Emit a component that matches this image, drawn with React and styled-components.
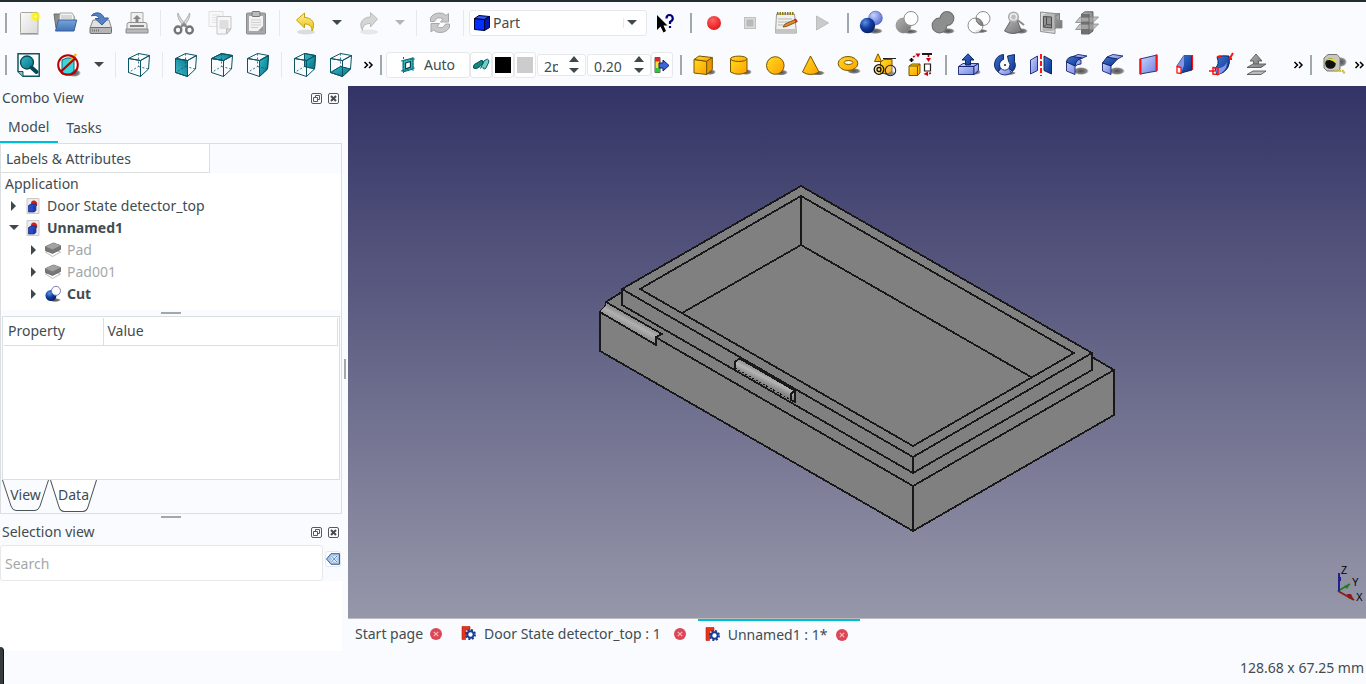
import React, { useState } from "react";
import styled, { createGlobalStyle, css } from "styled-components";

const color = {
  bg: "#fafbfe",
  white: "#ffffff",
  line: "#dcdfe1",
  soft: "#e6e8ea",
  text: "#414c51",
  muted: "#a3a7a9",
  handle: "#a0a8aa",
  accent: "#00bcd4",
};

const GlobalStyle = createGlobalStyle`
  *, *::before, *::after { box-sizing: border-box; }
  body {
    margin: 0;
    background: ${color.bg};
    color: ${color.text};
    font: 14px/22px "Noto Sans", sans-serif;
  }
  button, input, select { font: inherit; color: inherit; margin: 0; padding: 0; border: 0; background: none; }
  ul { list-style: none; margin: 0; padding: 0; }
`;

/* ---------- page frame ---------- */
const Window = styled.div`
  display: flex;
  flex-direction: column;
  min-height: 100vh;
  border-top: 2px solid #222d30;
  position: relative;
  overflow: hidden;
`;
const Toolbars = styled.header`
  display: flex;
  flex-direction: column;
`;
const ToolbarRow = styled.div`
  display: flex;
  align-items: center;
  gap: 2px;
  height: 42px;
`;
const ToolGroup = styled.div`
  display: flex;
  align-items: center;
  flex: none;
`;
const Grip = styled.span`
  width: 2px;
  height: 20px;
  margin: 0 4px 0 5px;
  background: ${color.handle};
`;
const Separator = styled.span`
  width: 1px;
  height: 26px;
  margin: 0 5px;
  background: ${color.soft};
`;
const ToolButton = styled.button`
  display: flex;
  align-items: center;
  justify-content: center;
  width: ${(p) => (p.$split ? 41 : 36)}px;
  height: 36px;
`;
const ArrowButton = styled.button`
  display: flex;
  align-items: center;
  justify-content: center;
  width: 22px;
  height: 36px;
`;
const MoreButton = styled.button`
  display: flex;
  align-items: center;
  justify-content: flex-end;
  width: ${(p) => p.$width}px;
  height: 36px;
`;
const Svg = styled.svg`
  display: block;
  flex: none;
  overflow: visible;
`;
const fieldBox = css`
  display: flex;
  align-items: center;
  height: 26px;
  background: ${color.white};
  border: 1px solid ${color.soft};
  border-radius: 3px;
`;
const Workbench = styled.label`
  ${fieldBox}
  width: 178px;
  padding: 0 6px 0 4px;
  gap: 3px;
`;
const WorkbenchSelect = styled.select`
  flex: 1;
  min-width: 0;
  appearance: none;
  outline: none;
`;
const WorkbenchArrow = styled.span`
  display: flex;
  align-items: center;
  height: 10px;
  padding: 0 3px;
  border-left: 1px solid ${color.soft};
`;
const FieldButton = styled.button`
  && {
    ${fieldBox}
    justify-content: center;
    gap: 7px;
    width: ${(p) => (p.$wide ? 84 : 22)}px;
  }
`;
const Swatch = styled.span`
  width: 16px;
  height: 16px;
  background: ${(p) => p.$fill};
`;
const Spin = styled.div`
  ${fieldBox}
  height: 22px;
  width: ${(p) => p.$width}px;
  margin-left: 1px;
  padding: 0 6px;
  justify-content: space-between;
`;
const SpinClip = styled.span`
  display: flex;
  align-items: flex-start;
  height: 13px;
  width: ${(p) => p.$width}px;
  overflow: hidden;
`;
const SpinInput = styled.input`
  flex: none;
  width: 100%;
  height: 16px;
  outline: none;
`;
const SpinButtons = styled.span`
  display: flex;
  flex-direction: column;
  gap: 6px;
`;
const SpinStep = styled.button`
  display: block;
  height: 6px;
`;

/* ---------- docks ---------- */
const Body = styled.div`
  display: flex;
  flex: 1;
  min-height: 0;
`;
const Side = styled.aside`
  display: flex;
  flex-direction: column;
  flex: none;
  width: 342px;
`;
const DockTitle = styled.div`
  display: flex;
  align-items: center;
  gap: 6px;
  height: 25px;
  padding: 0 3px 1px 2px;
`;
const DockName = styled.h2`
  flex: 1;
  margin: 0;
  font: inherit;
`;
const DockButton = styled.button`
  display: block;
  height: 11px;
`;
const Tabs = styled.div`
  display: flex;
  height: 32px;
`;
const Tab = styled.button`
  padding: ${(p) => (p.$active ? "2px 9px 0 8px" : "4px 8px 0")};
  border-bottom: 2px solid ${(p) => (p.$active ? color.accent : "transparent")};
`;
const Pane = styled.div`
  display: flex;
  flex-direction: column;
  flex: 1;
  border: 1px solid ${color.line};
`;
const TreeHeader = styled.div`
  width: 209px;
  height: 29px;
  padding: 4px 5px;
  background: ${color.white};
  border-right: 1px solid ${color.line};
  border-bottom: 1px solid ${color.line};
`;
const Tree = styled.ul`
  && { height: 137px; }
  background: ${color.white};
`;
const TreeItem = styled.li`
  display: flex;
  align-items: center;
  height: 22px;
  padding-left: ${(p) => [4, 8, 28][p.$level]}px;
  font-weight: ${(p) => (p.$bold ? 700 : 400)};
  color: ${(p) => (p.$muted ? color.muted : "inherit")};
`;
const TreeToggle = styled.button`
  display: flex;
  justify-content: center;
  width: 10px;
  margin-right: 6px;
`;
const TreeIcon = styled.span`
  display: flex;
  justify-content: center;
  width: 16px;
  margin-right: 6px;
`;
const Splitter = styled.div`
  display: flex;
  justify-content: center;
  align-items: center;
  flex: none;
  ${(p) => (p.$vertical ? "width: 6px;" : "height: 6px;")}
  &::after {
    content: "";
    width: ${(p) => (p.$vertical ? 2 : 20)}px;
    height: ${(p) => (p.$vertical ? 20 : 2)}px;
    background: ${color.handle};
  }
`;
const PropertyBox = styled.div`
  flex: 1;
  margin: 0 1px;
  padding: 1px;
  background: ${color.white};
  border: 1px solid ${color.line};
`;
const PropertyTable = styled.table`
  width: 100%;
  border-collapse: collapse;
  table-layout: fixed;
`;
const PropertyHead = styled.th`
  width: ${(p) => p.$width || "auto"};
  height: 27px;
  padding: 0 4px;
  font-weight: 400;
  text-align: left;
  border: solid ${color.line};
  border-width: 0 1px 1px 0;
`;
const SheetTabs = styled.div`
  display: flex;
  gap: 1px;
  height: 33px;
  padding-left: 1px;
`;
const SheetTab = styled.button`
  position: relative;
  width: 47px;
  height: ${(p) => (p.$active ? 32 : 31)}px;
  padding-bottom: 2px;
  svg { position: absolute; inset: 0; width: 100%; height: 100%; }
  span { position: relative; }
`;
const SearchRow = styled.form`
  display: flex;
  align-items: flex-start;
  gap: 2px;
  padding-right: 1px;
`;
const SearchInput = styled.input`
  && {
    flex: 1;
    min-width: 0;
    height: 36px;
    padding: 0 4px;
    background: ${color.white};
    border: 1px solid ${color.soft};
    border-radius: 3px;
    outline: none;
  }
  &::placeholder { color: ${color.muted}; opacity: 1; }
`;
const ClearButton = styled.button`
  && {
    display: flex;
    align-items: center;
    justify-content: center;
    width: 16px;
    height: 16px;
    margin-top: 6px;
    background: ${color.white};
    border: 1px solid ${color.soft};
    border-radius: 3px;
  }
`;
const SelectionList = styled.ul`
  && { height: 70px; }
  background: ${color.white};
`;

/* ---------- document area ---------- */
const Documents = styled.main`
  display: flex;
  flex-direction: column;
  flex: 1;
  min-width: 0;
`;
const Viewport = styled.div`
  position: relative;
  flex: 1;
  min-height: 0;
  background: linear-gradient(#333366, #9797aa);
  border-bottom: 1px solid #bcbcbc;
`;
const Scene = styled.svg`
  position: absolute;
  inset: 0;
  width: 100%;
  height: 100%;
`;
const AxisCross = styled.svg`
  position: absolute;
  right: 0;
  bottom: 14px;
`;
const DocTabs = styled.nav`
  display: flex;
  height: 32px;
`;
const DocTab = styled.div`
  display: flex;
  align-items: center;
  gap: ${(p) => (p.$plain ? 7 : 9)}px;
  padding: 0 12px 3px 7px;
  ${(p) => p.$active && css`
    box-shadow: inset 0 2px ${color.accent};
    padding-bottom: 1px;
  `}
`;
const DocTabName = styled.button`
  display: flex;
  align-items: center;
  gap: 8px;
  white-space: nowrap;
`;
const CloseButton = styled.button`
  display: block;
  margin-left: ${(p) => (p.$spaced ? 4 : 0)}px;
`;
const StatusBar = styled.footer`
  display: flex;
  align-items: center;
  justify-content: flex-end;
  height: 33px;
  padding: 0 2px;
`;
const DockEdge = styled.div`
  position: absolute;
  left: 0;
  bottom: 0;
  width: 4px;
  height: 37px;
  background: #363c3b;
  border-right: 1px solid #111;
  border-top-right-radius: 4px;
`;

/* ---------- icons ---------- */
const DefsSvg = styled.svg`
  position: absolute;
`;
const Gradients = () => (
  <DefsSvg width="0" height="0" aria-hidden="true">
    <defs>
      <linearGradient id="gPage" x2="1" y2="1"><stop stopColor="#fafafa" /><stop offset="1" stopColor="#d9d9d9" /></linearGradient>
      <linearGradient id="gBlue" x2="0" y2="1"><stop stopColor="#7aa5dc" /><stop offset="1" stopColor="#4272b5" /></linearGradient>
      <linearGradient id="gGold" x2="1" y2="1"><stop stopColor="#ffdc20" /><stop offset="1" stopColor="#ffa000" /></linearGradient>
      <linearGradient id="gLav" x2="1" y2="1"><stop stopColor="#cdd7ff" /><stop offset="1" stopColor="#6a7fe0" /></linearGradient>
      <linearGradient id="gNavy" x2="1" y2="1"><stop stopColor="#3f78d0" /><stop offset="1" stopColor="#0a3190" /></linearGradient>
      <linearGradient id="gTeal" x2="1" y2="1"><stop stopColor="#36bccb" /><stop offset="1" stopColor="#066f85" /></linearGradient>
      <linearGradient id="gTealUp" x2="1" y1="1" y2="0"><stop stopColor="#48bccb" /><stop offset="1" stopColor="#067a90" /></linearGradient>
      <linearGradient id="gGrey" x2="1" y2="1"><stop stopColor="#b2b2b2" /><stop offset="1" stopColor="#747474" /></linearGradient>
      <linearGradient id="gUndo" x2="0" y2="1"><stop stopColor="#fff0a0" /><stop offset="1" stopColor="#e8c000" /></linearGradient>
      <radialGradient id="rBlue" cx=".35" cy=".3" r=".75"><stop stopColor="#5d90e8" /><stop offset=".5" stopColor="#123f9f" /><stop offset="1" stopColor="#061d62" /></radialGradient>
      <radialGradient id="rLav" cx=".35" cy=".3" r=".8"><stop stopColor="#c5d0ff" /><stop offset="1" stopColor="#5064d0" /></radialGradient>
      <radialGradient id="rRed" cx=".4" cy=".3" r=".8"><stop stopColor="#ff6060" /><stop offset="1" stopColor="#dd1010" /></radialGradient>
      <radialGradient id="rGlow"><stop stopColor="#fffbd0" /><stop offset=".35" stopColor="#fff200" /><stop offset="1" stopColor="#fff200" stopOpacity="0.1" /></radialGradient>
      <radialGradient id="rShade"><stop stopColor="#222" stopOpacity=".8" /><stop offset=".7" stopColor="#333" stopOpacity=".6" /><stop offset="1" stopColor="#444" stopOpacity="0" /></radialGradient>
    </defs>
  </DefsSvg>
);

const shade = (cx = 16, cy = 20, rx = 8, ry = 3) => <ellipse cx={cx} cy={cy} rx={rx} ry={ry} fill="url(#rShade)" />;
const gold = { fill: "url(#gGold)", stroke: "#765500", strokeWidth: 1, strokeLinejoin: "round" };
const lav = { fill: "url(#gLav)", stroke: "#16246e", strokeWidth: 0.9, strokeLinejoin: "round" };
const navy = { fill: "url(#gNavy)", stroke: "#081a55", strokeWidth: 0.9, strokeLinejoin: "round" };
const grey = { fill: "url(#gGrey)", stroke: "#5a5a5a", strokeWidth: 0.9, strokeLinejoin: "round" };
const red = { fill: "none", stroke: "#ff1010", strokeWidth: 2 };

const cubeFaces = {
  front: "M1.5 5.5L13.5 7.5V23.500L1.5 19.500Z",
  top: "M1.5 5.5L13.5 7.5L22.500 2.500L11.500 .5Z",
  right: "M13.500 7.500L22.500 2.500L21.500 16L13.500 23.500Z",
  rear: "M11.500 .5L22.500 2.500L21.500 16L11.500 13.500Z",
  bottom: "M1.500 19.500L13.500 23.500L21.500 16L11.500 13.500Z",
};
const cube = (face) => (
  <g fill="none" stroke="#0b5564" strokeWidth="1" strokeLinejoin="round">
    {face && <path d={cubeFaces[face]} fill={face === "top" || face === "front" ? "url(#gTealUp)" : "url(#gTeal)"} />}
    <path d={cubeFaces.front} />
    <path d={cubeFaces.top} />
    <path d={cubeFaces.right} />
    <path d="M11.500 .5V13.500L1.500 19.500M11.500 13.500L21.500 16" strokeWidth=".8" strokeDasharray="2 2" />
  </g>
);

const ICONS = {
  new: <><rect x="3.500" y="1.500" width="17.500" height="21" rx="1" fill="url(#gPage)" stroke="#a8a8a0" /><path d="M3 23h18.500" stroke="#888" /><circle cx="18.500" cy="5.500" r="5.500" fill="url(#rGlow)" /></>,
  open: <><path d="M1 3h6l1 2h13v12H3z" fill="#8e8e8c" stroke="#6b6b69" /><path d="M7 2h12l2 3v5H6z" fill="#f4f4f2" stroke="#a5a5a5" /><path d="M8 5h11M8 7h11" stroke="#b9b9b9" /><path d="M5.500 9H23.700L21 20H2.500Z" fill="url(#gBlue)" stroke="#36619e" /></>,
  save: <><path d="M4 9H20L22.500 17H1Z" fill="#e2e2e2" stroke="#8a8a8a" /><rect x="1" y="16.500" width="21.500" height="6" rx="1" fill="#b5b5b5" stroke="#6e6e6e" /><path d="M3 19.500h8" stroke="#777" strokeDasharray="1 1" strokeWidth="2" /><path d="M2.500 5C4 1 13 0 15 7H19.500L13 14L6 7.500H10C9.500 5 6 3.500 2.500 5Z" fill="#5582c0" stroke="#33609f" /></>,
  print: <><path d="M6 1.500H18V12H6Z" fill="#f0f0f0" stroke="#aaa" /><path d="M12 4l4 4h-2.500v3h-3V8H8z" fill="#888" /><rect x="2" y="11.500" width="20" height="8" rx="2" fill="#ececec" stroke="#8f8f8f" /><path d="M5 15h14" stroke="#666" strokeWidth="1.500" /><path d="M1 18H23V22H1Z" fill="#b9b9b9" stroke="#8c8c8c" /></>,
  cut: <g><path d="M6 2C4.500 5 8 12 13 16L14.500 14C10 10 7 5 6 2ZM17.500 2C19 5 15.500 12 10.500 16L9 14C13.500 10 16.500 5 17.500 2Z" fill="#ddd" stroke="#a0a0a0" strokeWidth=".8" /><ellipse cx="6" cy="19" rx="3.300" ry="3.500" fill="none" stroke="#757575" strokeWidth="2.400" /><ellipse cx="17.500" cy="19" rx="3.300" ry="3.500" fill="none" stroke="#757575" strokeWidth="2.400" /><path d="M8.500 16.500L12 13L15 16.500" stroke="#888" strokeWidth="2" fill="none" /></g>,
  copy: <><path d="M1 .5H15V15.500H1Z" fill="#f8f8f8" stroke="#dedede" /><path d="M4 4h8M4 6.500h8M4 9h8M4 11.500h8" stroke="#e2e2e2" /><path d="M9 5.500H23V18L18.500 23H9Z" fill="#f6f6f6" stroke="#c6c6c6" /><path d="M11.500 9h9v9h-9z" fill="#dedede" /><path d="M23 18h-4.500v5z" fill="#ddd" stroke="#bbb" /></>,
  paste: <><rect x="2.500" y="2" width="19" height="21" rx="1" fill="#a8a8a8" stroke="#8b8b8b" /><path d="M5 5H19V20H5Z" fill="#f2f2f2" /><path d="M7 9h10M7 11.500h10M7 14h10M7 16.500h7" stroke="#cfcfcf" /><rect x="8" y=".5" width="8" height="5" rx="1" fill="#bbb" stroke="#777" /><path d="M19 15v5h-5z" fill="#999" /></>,
  undo: <><ellipse cx="12" cy="21" rx="9" ry="2.500" fill="#000" opacity=".12" /><path d="M2.500 9L10.500 2V6.500C18 6.500 22 12 18 20C18 15 15 13 10.500 13V17Z" fill="url(#gUndo)" stroke="#c6a208" /></>,
  redo: <><ellipse cx="12" cy="21" rx="9" ry="2.500" fill="#000" opacity=".08" /><path d="M20.500 8L13.500 1.500V6C6 6 1 12 5.500 19.500C5.500 14 9 12.500 13.500 12.500V16Z" fill="#d5d5d5" stroke="#bcbcbc" /></>,
  refresh: <g fill="#c9c9c9" stroke="#a8a8a8"><path d="M2.500 10.500V7Q5 2 12 2Q16 2 18 4.500L20.500 2.500V11H12.500L15 8Q9 4.500 6.500 10.500Z" /><path d="M21.500 13V16Q19 21.500 12 21.500Q8 21.500 5.500 19L3 21V12.500H11.500L9 15.500Q15 19 17.500 13Z" /></g>,
  partCube: <g stroke="#000033" strokeLinejoin="round" transform="translate(4 4)"><path d="M.5 3.500L10.500 4.500V15.500L.5 14.500Z" fill="#0030ff" /><path d="M.5 3.500L5 .5L15.500 1.500L10.500 4.500Z" fill="#2c56ff" /><path d="M10.500 4.500L15.500 1.500V12.500L10.500 15.500Z" fill="#0018b0" /></g>,
  help: <><path d="M4 4V19L7.500 15.500L10.500 21.500L13 20L10.500 14.500H14.500Z" fill="#000" /><path d="M13.500 7.500Q13.500 4 16.500 4T19.800 7.500Q19.800 9.500 17 11V13M17 15V17" fill="none" stroke="#00007c" strokeWidth="2.200" /></>,
  record: <circle cx="12" cy="12" r="7" fill="url(#rRed)" />,
  stop: <><rect x="6.500" y="6.500" width="11" height="11" fill="#dcdcdc" stroke="#c0c0c0" /><rect x="8.500" y="8.500" width="7" height="7" fill="#b8b8b8" /></>,
  note: <><path d="M2.500 3H20.500L22.500 22H1.500Z" fill="#f0f0ee" stroke="#9b9b98" /><path d="M1.500 18H22.500V22H1.500Z" fill="#c4c4c2" /><path d="M4 8h14M4 11h12M4 14h6" stroke="#b5b5b5" /><path d="M3 2.500h17" stroke="#8b7a18" strokeWidth="3" strokeDasharray="1.500 1" /><path d="M9 16L11 13L21 8.500L22.500 11L12.500 15.500Z" fill="#e08a2c" stroke="#6f4317" strokeWidth=".8" /><path d="M21 8L23 11" stroke="#d02020" strokeWidth="2" /></>,
  play: <path d="M6.500 5L18.500 12L6.500 19Z" fill="#c9cccc" stroke="#bdbdbd" />,
  boolean: <>{shade(16, 20, 8, 3)}<circle cx="16.500" cy="7" r="6.800" fill="url(#rLav)" stroke="#4a5aaa" strokeWidth=".7" /><circle cx="8.500" cy="14.500" r="7.700" fill="url(#rBlue)" /></>,
  cutBool: <>{shade(15, 20.500, 8, 2.500)}<circle cx="8.500" cy="14.500" r="7.500" fill="url(#gGrey)" stroke="#888" strokeWidth=".7" /><circle cx="16" cy="7.500" r="7" fill="#fff" stroke="#8d8d8d" /></>,
  fuse: <>{shade(17, 20, 7, 3)}<g stroke="#6b6b6b" strokeWidth="1.800"><circle cx="16" cy="7.500" r="6.500" /><circle cx="8.500" cy="14.500" r="7" /></g><circle cx="16" cy="7.500" r="6.500" fill="#8e8e8e" /><circle cx="8.500" cy="14.500" r="7" fill="#8e8e8e" /></>,
  common: <>{shade(14, 20, 7, 2)}<circle cx="8.500" cy="14.500" r="7.500" fill="#fff" fillOpacity=".8" stroke="#8d8d8d" /><circle cx="16" cy="7.500" r="7" fill="#fff" fillOpacity=".6" stroke="#8d8d8d" /><path d="M9.200 7.100A7.500 7.500 0 0 1 16 14.500A7 7 0 0 1 9.200 7.100Z" fill="url(#gGrey)" stroke="#777" /></>,
  check: <>{shade(18, 20, 7, 3)}<path d="M8 9H14L18.500 20Q10 25 1.500 20Z" {...grey} /><circle cx="10.500" cy="6" r="4.800" fill="#e6e6e6" fillOpacity=".85" stroke="#aaa" strokeWidth="1.500" /><path d="M14.500 9L21 14" stroke="#8b8b8b" strokeWidth="2" /><circle cx="10.500" cy="6" r="2.300" fill="#bbb" /></>,
  defeaturing: <><path d="M4 5L8 2.500H20.500V9.500H23V17H17L13.500 19.500H4Z" {...grey} stroke="#888" /><path d="M16 6L20.500 2.500V9.500" fill="#a4a4a4" stroke="#777" strokeWidth=".8" /><path d="M1.500 1V20.500L16 22.500V2.500Z" fill="#c9c9c9" fillOpacity=".65" stroke="#929292" /><path d="M4.500 5.500L12.500 6V17L4.500 16Z" fill="#909090" stroke="#4e4e4e" /><path d="M7.500 6v7.500l5 .5M7.500 13.500l-3 2.500" fill="none" stroke="#4e4e4e" /></>,
  section: <><path d="M6.500 3L10 .8H18V20L14 23H6.500Z" {...grey} /><path d="M5 6H23.500L18 11.500H.5Z" fill="#aaa" fillOpacity=".7" stroke="#858585" strokeWidth=".8" /><path d="M5 13H23.500L18 18.500H.5Z" fill="#aaa" fillOpacity=".7" stroke="#858585" strokeWidth=".8" /><path d="M6.500 3H14V6.500H6.500ZM6.500 10.500H14V13.500H6.500ZM6.500 18H14V23H6.500Z" fill="#707070" /><path d="M14 3V23" stroke="#606060" strokeWidth=".8" /></>,

  fit: <><path d="M1 .8H22.200V23.200H6L1 18.500Z" fill="#fff" stroke="#0b5564" strokeWidth="1.500" /><path d="M1 18.500H6V23.200" fill="#9bb" stroke="#0b5564" /><circle cx="10" cy="9.500" r="6.500" fill="url(#gTeal)" stroke="#064657" strokeWidth="1.300" /><path d="M14.500 14.500L19.500 19" stroke="#064657" strokeWidth="4" strokeLinecap="round" /></>,
  drawStyle: <>{shade(18, 20, 7, 4)}<path d="M6 7L11 5H18V18L14 21H6Z" fill="#3cd5dd" stroke="#0e6b78" /><path d="M13 11L20 1" stroke="#e8c31c" strokeWidth="2.500" /><circle cx="12" cy="12" r="9.800" fill="none" stroke="#b80000" strokeWidth="2" /><path d="M5 18.500L19 5.500" stroke="#b80000" strokeWidth="2.300" /></>,
  iso: cube(),
  front: cube("front"),
  top: cube("top"),
  right: cube("right"),
  rear: cube("rear"),
  bottom: cube("bottom"),

  plane: <g transform="translate(4 4)"><path d="M2 3.500L12 1V12L2 15Z" fill="#3cc0c8" stroke="#0a6570" /><path d="M4.500 6L9.500 4.500V10L4.500 12Z" fill="#fff" stroke="#053f49" strokeWidth="1.300" /><path d="M0 4L14 2M0 14L14 11M2.500 0v16M12 0v15" stroke="#087885" strokeDasharray="2 1" /></g>,
  construction: <g transform="translate(4 4)"><path d="M7.500 11.500L11 4Q16 0 15.800 5L13 11Q10 13.500 10 10" fill="#6cd0c4" stroke="#065c62" /><path d="M.5 11Q0 7 4 6L8 3.500Q11 3 10 6L7 9.500Q3 13 .5 11Z" fill="#10897f" stroke="#044d50" /></g>,
  apply: <g transform="translate(4 4)"><path d="M1 .5H6V15.500H1Z" fill="#f8e03a" stroke="#555" /><path d="M1 .5H6V4.500H1Z" fill="#e62424" /><path d="M1 11H6V15.500H1Z" fill="#35c435" /><path d="M5 6H9V3L15 8.500L9 14V11H5Z" fill="#3c66d8" stroke="#0a246e" /></g>,

  box: <>{shade(18, 19, 6, 3)}<g {...gold}><path d="M2 6.500L14.700 8.300V21.500L2 20Z" /><path d="M2 6.500L7 3L20.300 4.500L14.700 8.300Z" /><path d="M14.700 8.300L20.300 4.500V16.500L14.700 21.500Z" fill="#eb9800" /></g></>,
  cylinder: <>{shade(18, 19, 6, 3)}<path d="M2.500 5.500V19Q10.500 23.500 19 19V5.500" {...gold} /><ellipse cx="10.700" cy="5.800" rx="8.200" ry="2.700" {...gold} /></>,
  sphere: <>{shade(17, 19.500, 7, 3)}<circle cx="11.300" cy="12.500" r="8.800" {...gold} /></>,
  cone: <>{shade(18, 20, 7, 2.500)}<path d="M10.500 3L19 19Q10.500 24 2.500 19Z" {...gold} /></>,
  torus: <>{shade(18, 18, 7, 3)}<ellipse cx="12" cy="10.500" rx="9.800" ry="7" {...gold} /><ellipse cx="12.500" cy="9.500" rx="4.300" ry="2" fill="#fff" stroke="#765500" /></>,
  primitives: <>{shade(17, 20, 6, 3)}<path d="M8.500 9L12 6.500H20V18L17 20.500H8.500Z" {...gold} /><path d="M6 .8L9.500 8.500H2.500Z" {...gold} /><path d="M11 5.500H24" stroke="#222" strokeWidth="1" /><g fill="none" stroke="#111" strokeWidth="1.300"><circle cx="7" cy="16.500" r="4.800" fill="#ffc000" fillOpacity=".4" /><circle cx="7" cy="16.500" r="2" /></g><circle cx="18.500" cy="17.500" r="5.200" fill="#e6e9ff" fillOpacity=".2" stroke="#1c2350" strokeWidth="1.100" /></>,
  builder: <><path d="M1 13L4 11H12V20L9.500 22.500H1Z" {...gold} /><path d="M1 13H9.500V22.500M9.500 13L12 11" fill="none" stroke="#765500" /><path d="M14 1H24" stroke="#000" strokeWidth="1.800" /><path d="M16.500 11H22.500V18H16.500Z" fill="#fff" stroke="#222" strokeWidth="1.200" /><path d="M3.500 5v4M1.500 7h4" stroke="#000" strokeWidth="1.600" /><path d="M5 4L8 2.500M20.500 2v4M23 20l-3 1" stroke="#c00000" strokeWidth="1.600" strokeDasharray="2 1" /><path d="M7.500 .5h5l-2.500 4zM18 5h5L20.500 9zM20 18.500v4.500l-4.500-2z" fill="#d00010" /></>,

  extrude: <>{shade(18, 19, 6, 3)}<path d="M1.500 13.500L6 10.500H21L17 13.500V21.500H1.500Z" {...lav} /><path d="M17 13.500L21.500 10.500V17.500L17 21.500Z" {...lav} /><path d="M1.500 13.500H17" stroke="#16246e" /><path d="M11 .8L17 7H13.500V12H8.500V7H5Z" {...navy} /></>,
  revolve: <>{shade(17, 20, 6, 2)}<path d="M10.500 1.500A10 10 0 0 0 4.500 18.500L8 15.500A5.500 5.500 0 0 1 10.500 6.500Z" {...navy} /><path d="M5 19A9.500 9.500 0 0 0 18.500 19.500L15.500 15.500A5 5 0 0 1 8 15.500Z" {...lav} /><path d="M14.500 3L21.500 1.500V8.500Q24 14 19.500 18.500L16 15Q18.500 11 15.500 8Z" {...navy} /><circle cx="12" cy="12" r="1" fill="#123" /></>,
  mirror: <><path d="M1.500 7L8.500 3V17.500L1.500 21Z" {...lav} /><path d="M15 3L22.500 7V21L15 17.500Z" {...navy} /><path d="M12 1V23" stroke="#ff1616" strokeWidth="2" strokeDasharray="5 2" /></>,
  fillet: <>{shade(16, 18, 8, 4)}<path d="M1.500 9V18L10 21.500V13.500Q12 11 16 11V7L5 5Z" {...lav} /><path d="M1.500 9Q2 4 8 3.500L17.500 5Q11 6 10 13Z" {...navy} /><path d="M8 3.500L13 1.500L22 3L17.500 5Z" {...lav} /></>,
  chamfer: <>{shade(16, 18, 8, 4)}<path d="M1.500 10V18L10 21.500V13L7 9Z" {...lav} /><path d="M1.500 10L6 4L16.500 6L10 13Z" {...navy} /><path d="M6 4L12 1.500L22 3L16.500 6Z" {...lav} /></>,
  ruled: <><path d="M3 6L20 2V18L3 21Z" {...lav} /><path d="M3.500 5.500V21.500M19.500 1.500V17.500" {...red} /></>,
  loft: <><path d="M4 13L11 2.500H19V17L8 20Z" {...navy} /><path d="M4 13L11 2.500V12.500L8 20Z" fill="#8094e8" /><path d="M4 13.500L8 14.500V20.500L4 20Z" fill="#fff" stroke="#ff1010" strokeWidth="1.300" /><path d="M11 2.500H19.500V17" {...red} strokeWidth="1.200" /></>,
  sweep: <><path d="M8 4Q13 2 20 3Q23 18 8 22L6 15Q11 12 8 4Z" {...navy} /><path d="M18 9Q18 19 8 22L7 15Q15 16 18 9Z" fill="#8395e8" /><path d="M24 0L20.500 6M20.500 6H23M8 4L12 3" {...red} /><path d="M4 14.500L9 15V21.500L4 21ZM0 18H6" {...red} strokeWidth="1.500" /></>,
  offset: <><path d="M11 1L17 8H13.500V12H8.500V8H5Z" {...grey} /><path d="M2 14.500L8 11H21L16 14.500Z" {...grey} /><path d="M2 21.500L8 18H21L16 21.500Z" {...grey} fill="#bbb" /></>,
  tape: <>{shade(19, 9, 6, 5)}<path d="M2 5L6 1.500H15L18 5V16L16 18H5L2 15Z" fill="#c8c8bd" stroke="#777" /><circle cx="8.500" cy="10.500" r="5.300" fill="#101010" /><path d="M3.500 8Q7 3 14 7V10.500Q9 5 3.500 8Z" fill="#e8de24" /><path d="M12 17.500L22 18V21" fill="none" stroke="#d3bd31" strokeWidth="2.300" strokeDasharray="2 .6" /></>,
};

const Icon = ({ name, size = 24 }) => (
  <Svg width={size} height={size} viewBox={size === 16 ? "4 4 16 16" : "0 0 24 24"} aria-hidden="true">{ICONS[name]}</Svg>
);
const Triangle = ({ dir = "down", fill = "#3f484c" }) => {
  const shapes = { down: [10, 6, "0,0 10,0 5,5"], up: [10, 6, "0,6 10,6 5,0"], right: [6, 10, "0,0 5,5 0,10"] };
  const [w, h, points] = shapes[dir];
  return <Svg width={w} height={h} aria-hidden="true"><polygon points={points} fill={fill} /></Svg>;
};
const Chevrons = () => (
  <Svg width="9" height="8" aria-hidden="true"><path d="M.5 1L3.500 4L.5 7M5 1L8 4L5 7" fill="none" stroke="#000" strokeWidth="1.500" /></Svg>
);
const DocumentIcon = () => (
  <Svg width="14" height="16" aria-hidden="true">
    <path d="M1 .5H13V15.500H1Z" fill="#ececec" stroke="#c9c9c9" />
    <path d="M5 5.500Q5 2 8.500 2.500Q12 3.500 11 8H6Z" fill="#cc2214" />
    <path d="M2.500 7.500L5 6H10V12.500L8 14H2.500Z" fill="#2748c8" stroke="#112777" strokeWidth=".7" />
    <path d="M8 8V14" stroke="#112777" strokeWidth=".7" />
  </Svg>
);
const PadIcon = () => (
  <Svg width="16" height="16" viewBox="0 0 16 16" aria-hidden="true">
    <path d="M.5 10L7 7L15.500 10L7.500 14.500Z" fill="#fff" stroke="#aaa" strokeWidth=".8" />
    <path d="M.5 4.500L8.500 1L15.500 3.500V7.500L7.500 11.500L.5 8.500Z" fill="#777" stroke="#555" strokeWidth=".7" />
    <path d="M.5 4.500L8.500 1L15.500 3.500L7.500 7.500Z" fill="#a2a2a2" />
  </Svg>
);
const CutIcon = () => (
  <Svg width="16" height="16" viewBox="0 0 16 16" aria-hidden="true">
    {shade(10, 14, 6, 2)}
    <circle cx="6" cy="9.500" r="5.500" fill="url(#rBlue)" />
    <circle cx="11" cy="4.800" r="4.500" fill="#fff" stroke="#7981ad" />
  </Svg>
);
const FreeCadIcon = () => (
  <Svg width="15" height="15" viewBox="0 0 15 15" aria-hidden="true">
    <path d="M1 .5H9V4H4.500V6H8V9H4.500V13.500H1Z" fill="#e8331b" stroke="#b31b0a" strokeWidth=".6" />
    <circle cx="9.500" cy="8.500" r="3.200" fill="#fff" stroke="#173c94" strokeWidth="2" />
    <circle cx="9.500" cy="8.500" r="4.600" fill="none" stroke="#173c94" strokeWidth="1.800" strokeDasharray="2 1.610" />
  </Svg>
);
const CloseIcon = () => (
  <Svg width="12" height="12" aria-hidden="true"><circle cx="6" cy="6" r="6" fill="#dc4655" /><path d="M3.800 3.800L8.200 8.200M8.200 3.800L3.800 8.200" stroke="#f3bcc2" strokeWidth="1.200" /></Svg>
);
const FloatIcon = () => (
  <Svg width="11" height="11" aria-hidden="true"><g fill="none" stroke="#555b5d"><rect x=".5" y=".5" width="10" height="10" rx="1.500" /><path d="M4.500 4.500V2.500H8.500V6.500H6.500M2.500 4.500H6.500V8.500H2.500Z" /></g></Svg>
);
const DockCloseIcon = () => (
  <Svg width="11" height="11" aria-hidden="true"><rect x=".5" y=".5" width="10" height="10" rx="1.500" fill="none" stroke="#555b5d" /><path d="M3 3L8 8M8 3L3 8" stroke="#454b4d" strokeWidth="2" /></Svg>
);
const ClearIcon = () => (
  <Svg width="14" height="12" aria-hidden="true"><path d="M.5 6L5 .7H13.500V11.300H5Z" fill="#a9c5e8" stroke="#33639f" /><path d="M5.500 3L11 9M11 3L5.500 9" stroke="#fff" strokeWidth="2.500" /><path d="M5.500 3L11 9M11 3L5.500 9" stroke="#4c7db8" /></Svg>
);

/* ---------- pieces ---------- */
const Tools = ({ items }) =>
  items.map((name) => <ToolButton key={name} aria-label={name}><Icon name={name} /></ToolButton>);

const SplitTool = ({ name, fill }) => (
  <>
    <ToolButton $split aria-label={name}><Icon name={name} /></ToolButton>
    <ArrowButton aria-label={`${name} menu`}><Triangle fill={fill} /></ArrowButton>
  </>
);

const SpinBox = ({ label, value, width, clip }) => (
  <Spin $width={width}>
    <SpinClip $width={clip}><SpinInput aria-label={label} defaultValue={value} /></SpinClip>
    <SpinButtons>
      <SpinStep aria-label={`Increase ${label}`}><Triangle dir="up" /></SpinStep>
      <SpinStep aria-label={`Decrease ${label}`}><Triangle /></SpinStep>
    </SpinButtons>
  </Spin>
);

const DockHeader = ({ title }) => (
  <DockTitle>
    <DockName>{title}</DockName>
    <DockButton aria-label={`Float ${title}`}><FloatIcon /></DockButton>
    <DockButton aria-label={`Close ${title}`}><DockCloseIcon /></DockButton>
  </DockTitle>
);

const TREE = [
  { label: "Door State detector_top", level: 1, icon: <DocumentIcon /> },
  { label: "Unnamed1", level: 1, icon: <DocumentIcon />, open: true, bold: true },
  { label: "Pad", level: 2, icon: <PadIcon />, muted: true },
  { label: "Pad001", level: 2, icon: <PadIcon />, muted: true },
  { label: "Cut", level: 2, icon: <CutIcon />, bold: true },
];

const SheetTabButton = ({ active, children }) => (
  <SheetTab $active={active}>
    <svg viewBox="0 0 47 31" preserveAspectRatio="none" aria-hidden="true">
      <path d="M.5 0L9 26Q10.500 30.500 14 30.500H33Q36.500 30.500 38 26L46.500 0" fill={active ? "#fff" : color.bg} stroke="#4b5457" />
    </svg>
    <span>{children}</span>
  </SheetTab>
);

const Model = () => (
  <Scene viewBox="348 86 1018 532" role="img" aria-label="3D model">
    <defs>
      <linearGradient id="groove" gradientUnits="userSpaceOnUse" x1="634" y1="316" x2="627" y2="329">
        <stop stopColor="#808080" /><stop offset=".5" stopColor="#b0b0b0" /><stop offset="1" stopColor="#8c8c8c" />
      </linearGradient>
      <linearGradient id="ridge" gradientUnits="userSpaceOnUse" x1="768" y1="373" x2="761" y2="387">
        <stop stopColor="#8a8a8a" /><stop offset=".35" stopColor="#b4b4b4" /><stop offset=".7" stopColor="#8a8a8a" /><stop offset="1" stopColor="#777" />
      </linearGradient>
    </defs>
    <g shapeRendering="crispEdges" stroke="#181818" strokeWidth="1.800" fill="none">
      <path d="M600 312L606 305V302L622 292V289L801 186L1092 353V357L1114 370V415L913 531L600 351Z" fill="#808080" />
      <path d="M622 289L913 457L1092 353M622 289V305L913 473L1092 370V353M913 457V473" />
      <path d="M640 289L801 196L1074 353L913 446Z" />
      <path d="M801 196V245L682 313M801 245L1031 377" />
      <path d="M657 338L913 486L1114 370M913 486V531" />
      <path d="M600 312L606 305V302L662 334L656 337V345Z" fill="url(#groove)" stroke="none" />
      <path d="M606 302L662 334L656 337V345L600 312" />
      <path d="M735 368V362L740 358L795 389V402L735 369Z" fill="url(#ridge)" stroke="none" />
      <path d="M735 369V362L740 358M795 389V402L791 400V394L795 390" />
      <path d="M740 358L795 390" strokeWidth="3" />
      <path d="M735 368L791 400" strokeWidth="1" strokeDasharray="2 2" />
    </g>
  </Scene>
);

const Axes = () => (
  <AxisCross width="34" height="40" viewBox="0 0 34 40" role="img" aria-label="Axes">
    <path d="M6 27L18 20" stroke="#208020" strokeWidth="2" /><path d="M12 22L18 20L15 25Z" fill="#208020" />
    <path d="M6 27L22 36" stroke="#8c1c1c" strokeWidth="2" /><path d="M15 30L19 30L22 36L16 34Z" fill="#8c1c1c" />
    <path d="M7 27V9" stroke="#20208c" strokeWidth="2" /><path d="M6 13h3v4H6z" fill="#20208c" />
    <g fontFamily="Liberation Sans, sans-serif" fontSize="10" fill="#000"><text x="9" y="10">Z</text><text x="20" y="22">Y</text><text x="24" y="37">X</text></g>
  </AxisCross>
);

export default function App() {
  const [workbench, setWorkbench] = useState("Part");
  return (
    <Window>
      <GlobalStyle />
      <Gradients />
      <Toolbars>
        <ToolbarRow>
          <ToolGroup>
            <Grip />
            <Tools items={["new", "open", "save", "print"]} />
            <Separator />
            <Tools items={["cut", "copy", "paste"]} />
            <Separator />
            <SplitTool name="undo" />
            <SplitTool name="redo" fill="#b3b6b8" />
            <Separator />
            <Tools items={["refresh"]} />
            <Separator />
            <Workbench>
              <Icon name="partCube" size={16} />
              <WorkbenchSelect aria-label="Workbench" value={workbench} onChange={(e) => setWorkbench(e.target.value)}>
                <option>Part</option>
              </WorkbenchSelect>
              <WorkbenchArrow><Triangle /></WorkbenchArrow>
            </Workbench>
            <Tools items={["help"]} />
          </ToolGroup>
          <ToolGroup>
            <Grip />
            <Tools items={["record", "stop", "note", "play"]} />
          </ToolGroup>
          <ToolGroup>
            <Grip />
            <Tools items={["boolean", "cutBool", "fuse", "common", "check", "defeaturing", "section"]} />
          </ToolGroup>
        </ToolbarRow>
        <ToolbarRow>
          <ToolGroup>
            <Grip />
            <Tools items={["fit"]} />
            <SplitTool name="drawStyle" />
            <Separator />
            <Tools items={["iso"]} />
            <Separator />
            <Tools items={["front", "top", "right"]} />
            <Separator />
            <Tools items={["rear", "bottom"]} />
            <MoreButton $width={14} aria-label="More views"><Chevrons /></MoreButton>
          </ToolGroup>
          <ToolGroup>
            <Grip />
            <FieldButton $wide><Icon name="plane" size={16} />Auto</FieldButton>
            <FieldButton aria-label="Construction mode"><Icon name="construction" size={16} /></FieldButton>
            <FieldButton aria-label="Line colour"><Swatch $fill="#000" /></FieldButton>
            <FieldButton aria-label="Face colour"><Swatch $fill="#ccc" /></FieldButton>
            <SpinBox label="line width" value="2px" width={49} clip={14} />
            <SpinBox label="text size" value="0.20" width={64} clip={32} />
            <FieldButton aria-label="Apply style"><Icon name="apply" size={16} /></FieldButton>
          </ToolGroup>
          <ToolGroup>
            <Grip />
            <Tools items={["box", "cylinder", "sphere", "cone", "torus", "primitives", "builder"]} />
          </ToolGroup>
          <ToolGroup>
            <Grip />
            <Tools items={["extrude", "revolve", "mirror", "fillet", "chamfer", "ruled", "loft", "sweep", "offset"]} />
            <MoreButton $width={28} aria-label="More part tools"><Chevrons /></MoreButton>
          </ToolGroup>
          <ToolGroup>
            <Grip />
            <Tools items={["tape"]} />
            <MoreButton $width={12} aria-label="More measure tools"><Chevrons /></MoreButton>
          </ToolGroup>
        </ToolbarRow>
      </Toolbars>

      <Body>
        <Side>
          <DockHeader title="Combo View" />
          <Tabs>
            <Tab $active>Model</Tab>
            <Tab>Tasks</Tab>
          </Tabs>
          <Pane>
            <TreeHeader>Labels &amp; Attributes</TreeHeader>
            <Tree>
              <TreeItem $level={0}>Application</TreeItem>
              {TREE.map((item) => (
                <TreeItem key={item.label} $level={item.level} $bold={item.bold} $muted={item.muted}>
                  <TreeToggle aria-label={`Toggle ${item.label}`}><Triangle dir={item.open ? "down" : "right"} /></TreeToggle>
                  <TreeIcon>{item.icon}</TreeIcon>
                  {item.label}
                </TreeItem>
              ))}
            </Tree>
            <Splitter />
            <PropertyBox>
              <PropertyTable>
                <thead><tr><PropertyHead $width="99px">Property</PropertyHead><PropertyHead>Value</PropertyHead></tr></thead>
              </PropertyTable>
            </PropertyBox>
            <SheetTabs>
              <SheetTabButton>View</SheetTabButton>
              <SheetTabButton active>Data</SheetTabButton>
            </SheetTabs>
          </Pane>
          <Splitter />
          <DockHeader title="Selection view" />
          <SearchRow onSubmit={(e) => e.preventDefault()}>
            <SearchInput placeholder="Search" aria-label="Search" />
            <ClearButton type="reset" aria-label="Clear search"><ClearIcon /></ClearButton>
          </SearchRow>
          <SelectionList />
        </Side>
        <Splitter $vertical />
        <Documents>
          <Viewport>
            <Model />
            <Axes />
          </Viewport>
          <DocTabs>
            <DocTab $plain>
              <DocTabName>Start page</DocTabName>
              <CloseButton aria-label="Close Start page"><CloseIcon /></CloseButton>
            </DocTab>
            <DocTab>
              <DocTabName><FreeCadIcon />Door State detector_top : 1</DocTabName>
              <CloseButton $spaced aria-label="Close Door State detector_top"><CloseIcon /></CloseButton>
            </DocTab>
            <DocTab $active>
              <DocTabName><FreeCadIcon />Unnamed1 : 1*</DocTabName>
              <CloseButton aria-label="Close Unnamed1"><CloseIcon /></CloseButton>
            </DocTab>
          </DocTabs>
        </Documents>
      </Body>
      <StatusBar>128.68 x 67.25 mm</StatusBar>
      <DockEdge />
    </Window>
  );
}
